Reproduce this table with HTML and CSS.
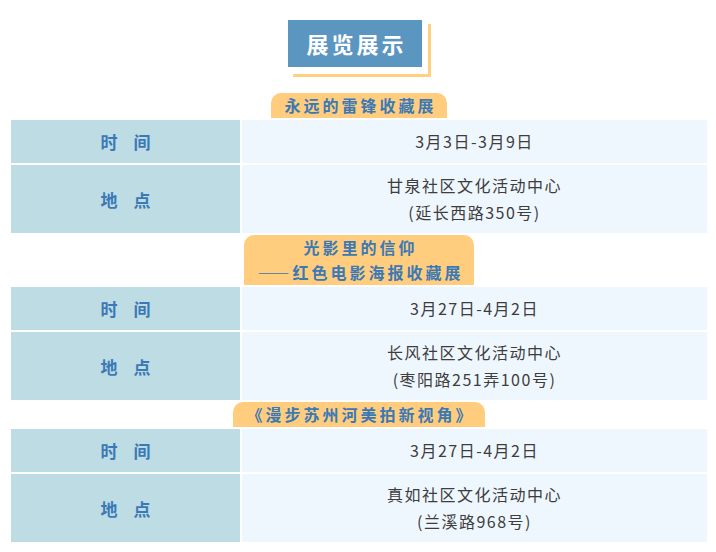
FILE: index.html
```html
<!DOCTYPE html>
<html lang="zh-CN">
<head>
<meta charset="utf-8">
<title>展览展示</title>
<link rel="stylesheet" href="styles.css">
</head>
<body>
<div class="page">
  <div class="title-wrap">
    <h1 class="title">展览展示</h1>
  </div>
  <div class="list">
    <div class="tag-line"><div class="tag">永远的雷锋收藏展</div></div>
    <div class="row">
      <div class="label">时 间</div>
      <div class="value">3月3日-3月9日</div>
    </div>
    <div class="row place">
      <div class="label">地 点</div>
      <div class="value">甘泉社区文化活动中心<br>(延长西路350号)</div>
    </div>

    <div class="tag-line"><div class="tag">光影里的信仰<br>——红色电影海报收藏展</div></div>
    <div class="row">
      <div class="label">时 间</div>
      <div class="value">3月27日-4月2日</div>
    </div>
    <div class="row place">
      <div class="label">地 点</div>
      <div class="value">长风社区文化活动中心<br>(枣阳路251弄100号)</div>
    </div>

    <div class="tag-line"><div class="tag">《漫步苏州河美拍新视角》</div></div>
    <div class="row">
      <div class="label">时 间</div>
      <div class="value">3月27日-4月2日</div>
    </div>
    <div class="row place">
      <div class="label">地 点</div>
      <div class="value">真如社区文化活动中心<br>(兰溪路968号)</div>
    </div>
  </div>
</div>
</body>
</html>
```

FILE: styles.css
```css
* { box-sizing: border-box; }

html, body {
  margin: 0;
  padding: 0;
  background: #ffffff;
}

body {
  font-family: "Noto Sans CJK SC", "Noto Sans", sans-serif;
  color: #3d3d3d;
}

.page {
  padding: 20px 9px 0 11px;
}

.title-wrap {
  display: flex;
  justify-content: center;
  padding-right: 8px;
  margin-bottom: 26px;
}

.title {
  position: relative;
  margin: 0;
  width: 134px;
  height: 47px;
  background: #5b96c1;
  color: #ffffff;
  font-size: 22px;
  font-weight: 700;
  letter-spacing: 3px;
  line-height: 47px;
  text-align: center;
  padding-left: 3px;
}

.title::after {
  content: "";
  position: absolute;
  left: 5px;
  top: 4px;
  right: -9px;
  bottom: -10px;
  border-right: 3px solid #ffd17f;
  border-bottom: 3px solid #ffd17f;
  pointer-events: none;
}

.list {
  display: flex;
  flex-direction: column;
  gap: 2px;
}

.tag-line {
  display: flex;
  justify-content: center;
}

.tag {
  background: #ffcd7d;
  color: #3a79b6;
  font-size: 16px;
  font-weight: 700;
  letter-spacing: 3px;
  line-height: 25px;
  padding: 0 10px 0 13px;
  border-radius: 10px 10px 0 0;
  text-align: center;
}

.row {
  display: grid;
  grid-template-columns: 229px 1fr;
  gap: 2px;
}

.label {
  background: #bedce3;
  color: #3a79b6;
  font-size: 17px;
  font-weight: 700;
  letter-spacing: 6px;
  padding-left: 6px;
  display: flex;
  align-items: center;
  justify-content: center;
}

.value {
  background: #eff7fe;
  font-size: 16px;
  letter-spacing: 1.5px;
  line-height: 27px;
  padding: 8px 0;
  text-align: center;
}

.place .value {
  padding: 7px 0;
}
```
